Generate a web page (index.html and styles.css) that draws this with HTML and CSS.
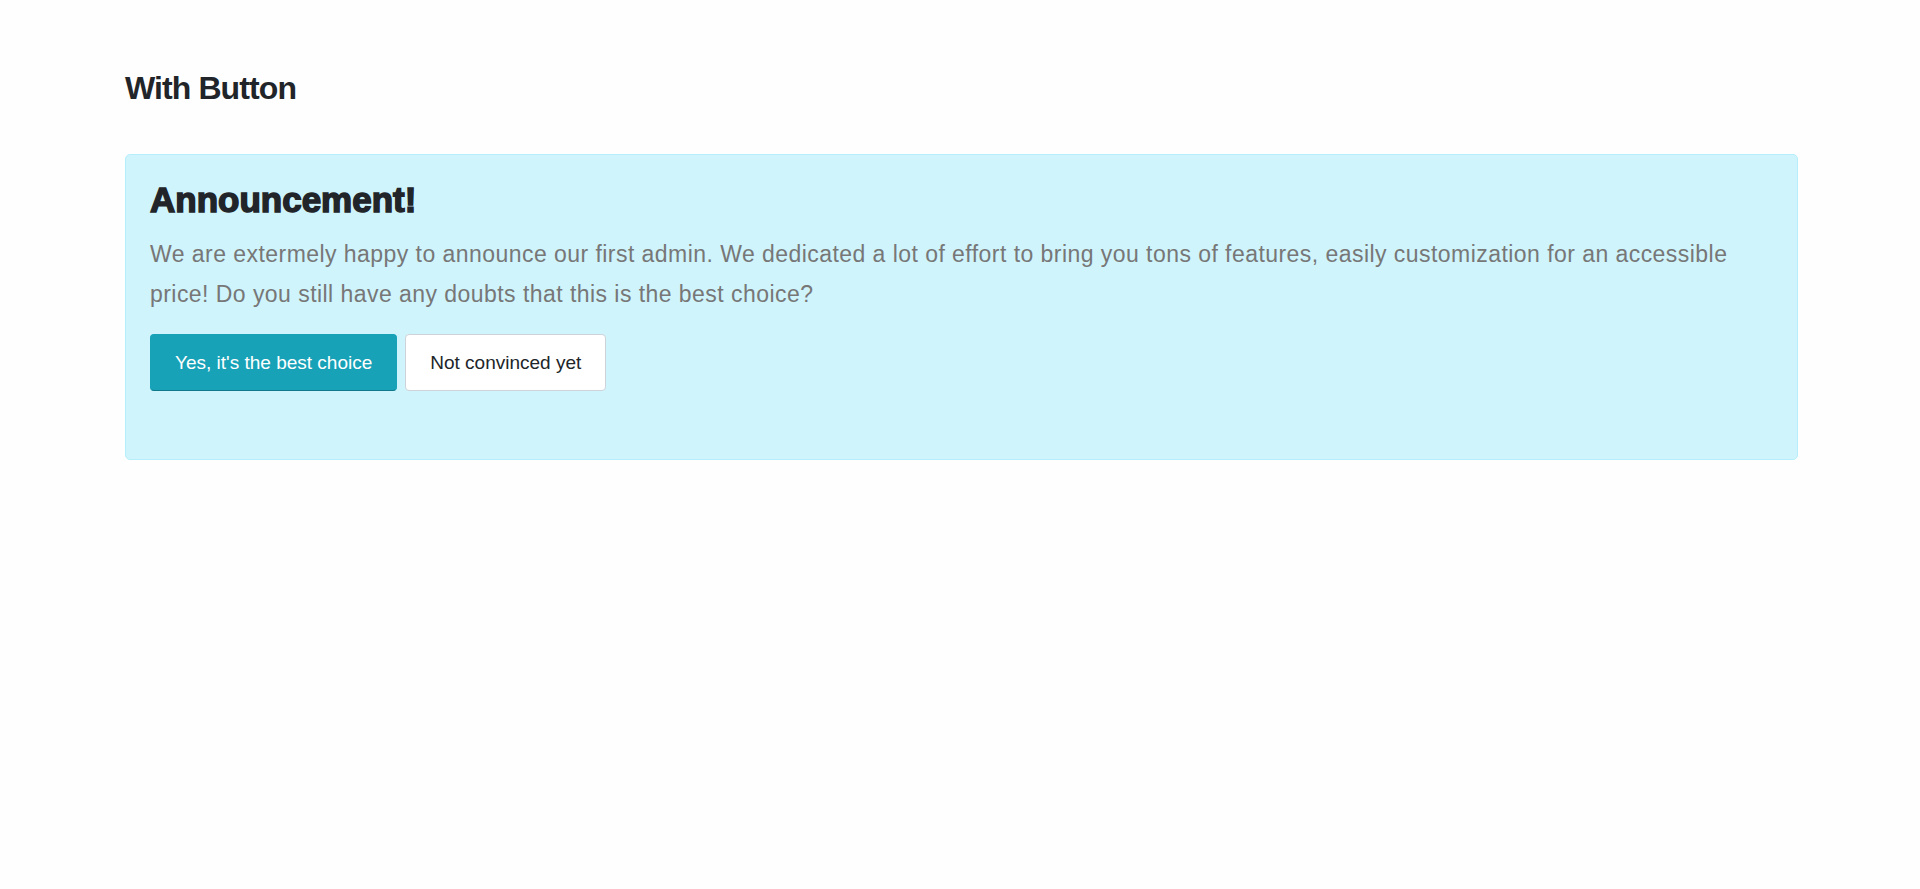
FILE: index.html
```html
<!DOCTYPE html>
<html lang="en">
<head>
    <meta charset="UTF-8">
    <meta name="viewport" content="width=device-width, initial-scale=1.0">
    <title>With Button</title>
    <link rel="stylesheet" href="styles.css">
</head>
<body>
    <div class="page">
        <h2 class="section-title">With Button</h2>
        <div class="alert">
            <h3 class="alert-heading">Announcement!</h3>
            <p class="alert-text">We are extermely happy to announce our first admin. We dedicated a lot of effort to bring you tons of features, easily customization for an accessible price! Do you still have any doubts that this is the best choice?</p>
            <div class="alert-actions">
                <button class="btn btn-info">Yes, it's the best choice</button>
                <button class="btn btn-light">Not convinced yet</button>
            </div>
        </div>
    </div>
</body>
</html>
```

FILE: styles.css
```css
body {
    font-family: "Liberation Sans", Arial, sans-serif;
    margin: 0;
    padding: 0;
    background-color: #fefefe;
    color: #212529;
}
.page {
    padding: 69px 122px 0 125px;
}
.section-title {
    font-size: 32px;
    font-weight: bold;
    line-height: 38px;
    letter-spacing: -0.9px;
    margin: 0 0 47px;
    color: #212529;
}
.alert {
    background-color: #cff4fc;
    border: 1px solid #b6effb;
    border-radius: 5px;
    padding: 25px 24px 68px;
}
.alert-heading {
    font-size: 35px;
    font-weight: 900;
    line-height: 40px;
    letter-spacing: 0;
    -webkit-text-stroke: 1.5px #212529;
    margin: 0 0 14px;
    color: #212529;
}
.alert-text {
    font-size: 23px;
    line-height: 40px;
    letter-spacing: 0.45px;
    color: #777;
    margin: 0 0 20px;
}
.alert-actions {
    display: flex;
    gap: 8px;
}
.btn {
    font-family: inherit;
    font-size: 19px;
    line-height: 27px;
    padding: 14px 24px;
    border: 1px solid transparent;
    border-radius: 4px;
    cursor: pointer;
}
.btn-info {
    background-color: #17a2b8;
    border-color: #17a2b8 #17a2b8 #11798a;
    color: #fff;
}
.btn-light {
    background-color: #fff;
    border-color: #cdd3d8;
    color: #212529;
}
```
